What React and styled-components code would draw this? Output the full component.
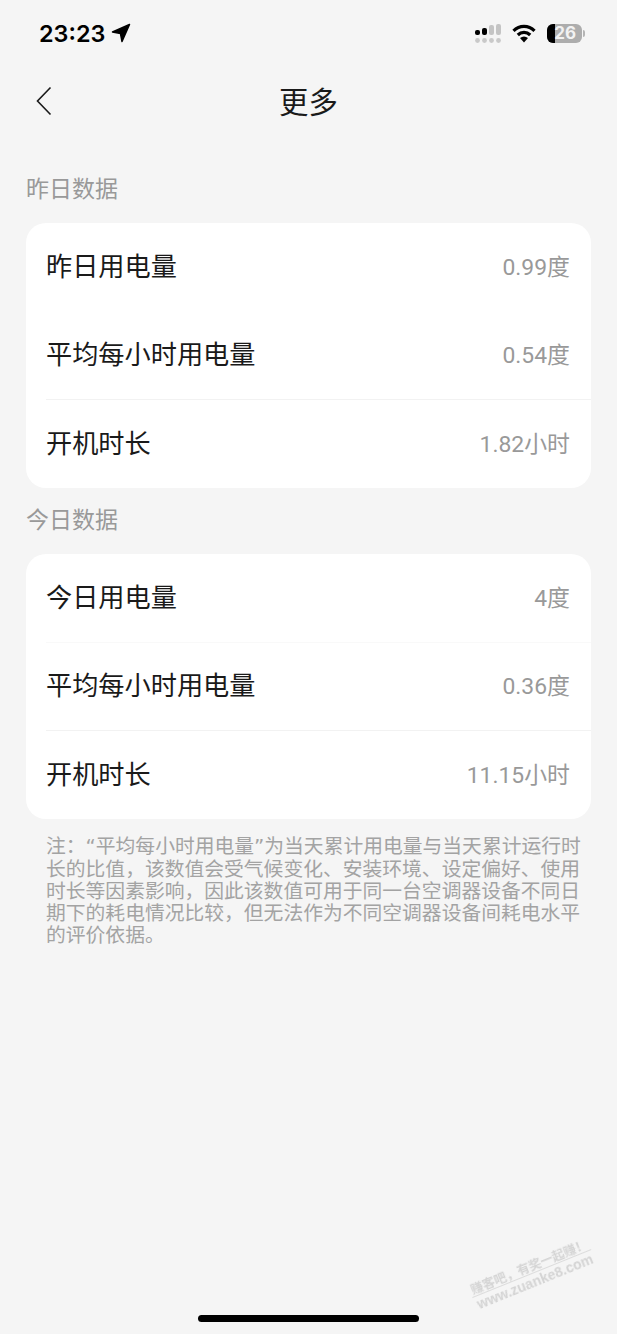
import React from "react";
import styled, { createGlobalStyle } from "styled-components";

const GlobalStyle = createGlobalStyle`
  html, body {
    margin: 0;
    padding: 0;
    background: #f5f5f5;
  }
  body {
    font-family: "Noto Sans CJK SC", "Liberation Sans", sans-serif;
  }
`;

const LATIN = `"Liberation Sans", "Noto Sans CJK SC", sans-serif`;

const Page = styled.div`
  position: relative;
  width: 617px;
  height: 1334px;
  overflow: hidden;
  display: flex;
  flex-direction: column;
  background: #f5f5f5;
`;

const StatusBar = styled.div`
  height: 34px;
  padding: 16px 32px 0 39px;
  display: flex;
  align-items: center;
  justify-content: space-between;
`;

const Clock = styled.div`
  display: flex;
  align-items: center;
  gap: 6px;
  font-family: Inter, ${LATIN};
  font-size: 23.4px;
  font-weight: 600;
  color: #000;
`;

const StatusIcons = styled.div`
  display: flex;
  align-items: center;
  gap: 11px;
`;

const Battery = styled.div`
  position: relative;
  width: 35px;
  height: 19px;
  border-radius: 6px;
  overflow: hidden;
  background: #adadad;
  display: flex;
  align-items: center;
  justify-content: flex-end;
  padding-right: 6px;
  box-sizing: border-box;
  font-family: Inter, ${LATIN};
  font-size: 17px;
  font-weight: 700;
  color: #f2f2f2;
  &::before {
    content: "";
    position: absolute;
    left: 0;
    top: 0;
    bottom: 0;
    width: 8px;
    background: #000;
  }
  span {
    position: relative;
  }
`;

const BatteryWrap = styled.div`
  display: flex;
  align-items: center;
  gap: 1px;
  &::after {
    content: "";
    width: 2px;
    height: 7px;
    border-radius: 0 2px 2px 0;
    background: #b4b4b4;
  }
`;

const NavBar = styled.div`
  margin-top: 20px;
  margin-bottom: 1px;
  height: 60px;
  position: relative;
  display: flex;
  align-items: center;
  justify-content: center;
`;

const BackButton = styled.div`
  position: absolute;
  left: 35px;
  top: 16px;
  height: 30px;
`;

const Title = styled.div`
  font-size: 29.4px;
  color: #1a1a1a;
  line-height: 40px;
`;

const Content = styled.div`
  padding: 0 26px;
  display: flex;
  flex-direction: column;
`;

const SectionLabel = styled.div`
  font-size: 23px;
  line-height: 32px;
  color: #999;
  margin: ${(p) => p.$top}px 0 20px 0;
`;

const Card = styled.div`
  background: #fff;
  border-radius: 20px;
  display: flex;
  flex-direction: column;
`;

const Row = styled.div`
  height: 88.4px;
  box-sizing: border-box;
  margin-left: 20px;
  padding: 0 21px 4px 0;
  display: flex;
  align-items: center;
  justify-content: space-between;
  border-bottom: 1px solid ${(p) => p.$line || "transparent"};
  &:last-child {
    border-bottom: none;
  }
`;

const RowLabel = styled.div`
  font-size: 26.2px;
  color: #1a1a1a;
`;

const RowValue = styled.div`
  font-family: Roboto, ${LATIN};
  font-size: 22.9px;
  color: #999;
`;

const Note = styled.div`
  margin: 17px 8px 0 20px;
  font-family: "DejaVu Sans", "Noto Sans CJK SC", sans-serif;
  font-size: 19.8px;
  line-height: 22.2px;
  color: #a3a3a3;
  text-spacing-trim: space-all;
`;

const HomeBar = styled.div`
  position: absolute;
  left: 198px;
  bottom: 12px;
  width: 221px;
  height: 7px;
  border-radius: 4px;
  background: #000;
`;

const Watermark = styled.div`
  position: absolute;
  left: 468px;
  top: 1258px;
  width: 128px;
  transform: rotate(-22deg);
  transform-origin: center;
  color: #d4d4d4;
  text-align: center;
  font-weight: 700;
  filter: blur(0.4px);
`;

const MarkTop = styled.div`
  font-size: 12.5px;
  line-height: 15px;
  white-space: nowrap;
  border-bottom: 1px solid #dcdcdc;
`;

const MarkBottom = styled.div`
  font-family: ${LATIN};
  font-size: 14px;
  line-height: 16px;
  white-space: nowrap;
`;

const yesterday = [
  { label: "昨日用电量", value: "0.99度" },
  { label: "平均每小时用电量", value: "0.54度", line: "#f2f2f2" },
  { label: "开机时长", value: "1.82小时" },
];

const today = [
  { label: "今日用电量", value: "4度", line: "#f9f9f9" },
  { label: "平均每小时用电量", value: "0.36度", line: "#f2f2f2" },
  { label: "开机时长", value: "11.15小时" },
];

const DataCard = ({ rows }) => (
  <Card>
    {rows.map((r) => (
      <Row key={r.label} $line={r.line}>
        <RowLabel>{r.label}</RowLabel>
        <RowValue>{r.value}</RowValue>
      </Row>
    ))}
  </Card>
);

const App = () => {
  return (
    <Page>
      <GlobalStyle />
      <StatusBar>
        <Clock>
          23:23
          <svg width="20" height="20" viewBox="0 0 20 20">
            <path
              d="M18.5 1.5 L1.5 9 L9.5 10.5 L11 18.5 Z"
              fill="#000"
              stroke="#000"
              strokeWidth="1.5"
              strokeLinejoin="round"
            />
          </svg>
        </Clock>
        <StatusIcons>
          <svg width="26" height="19" viewBox="0 0 26 19">
            <rect x="0" y="6" width="5" height="5" rx="2" fill="#000" />
            <rect x="7" y="4" width="5" height="7" rx="2" fill="#000" />
            <rect x="14" y="1" width="5" height="10" rx="2" fill="#c4c4c4" />
            <rect x="21" y="0" width="5" height="11" rx="2" fill="#c4c4c4" />
            <circle cx="2.5" cy="16.5" r="2.4" fill="#c9c9c9" />
            <circle cx="9.5" cy="16.5" r="2.4" fill="#c9c9c9" />
            <circle cx="16.5" cy="16.5" r="2.4" fill="#c9c9c9" />
            <circle cx="23.5" cy="16.5" r="2.4" fill="#c9c9c9" />
          </svg>
          <svg width="24" height="19" viewBox="0 0 24 19">
            <path d="M1.5 6.8 C7.5 0.8 16.5 0.8 22.5 6.8" stroke="#000" strokeWidth="3.2" fill="none" />
            <path d="M5.8 11 C9.3 7.6 14.7 7.6 18.2 11" stroke="#000" strokeWidth="3.2" fill="none" />
            <path d="M8 14 L12 18.5 L16 14 C13.5 12 10.5 12 8 14 Z" fill="#000" />
          </svg>
          <BatteryWrap>
            <Battery>
              <span>26</span>
            </Battery>
          </BatteryWrap>
        </StatusIcons>
      </StatusBar>

      <NavBar>
        <BackButton>
          <svg width="20" height="30" viewBox="0 0 20 30">
            <path d="M15.5 1.5 L2.5 15 L15.5 28.5" stroke="#1a1a1a" strokeWidth="1.6" fill="none" />
          </svg>
        </BackButton>
        <Title>更多</Title>
      </NavBar>

      <Content>
        <SectionLabel $top={40}>昨日数据</SectionLabel>
        <DataCard rows={yesterday} />
        <SectionLabel $top={14}>今日数据</SectionLabel>
        <DataCard rows={today} />
        <Note>
          注：“平均每小时用电量”为当天累计用电量与当天累计运行时长的比值，该数值会受气候变化、安装环境、设定偏好、使用时长等因素影响，因此该数值可用于同一台空调器设备不同日期下的耗电情况比较，但无法作为不同空调器设备间耗电水平的评价依据。
        </Note>
      </Content>

      <Watermark>
        <MarkTop>赚客吧，有奖一起赚！</MarkTop>
        <MarkBottom>www.zuanke8.com</MarkBottom>
      </Watermark>
      <HomeBar />
    </Page>
  );
};

export default App;
